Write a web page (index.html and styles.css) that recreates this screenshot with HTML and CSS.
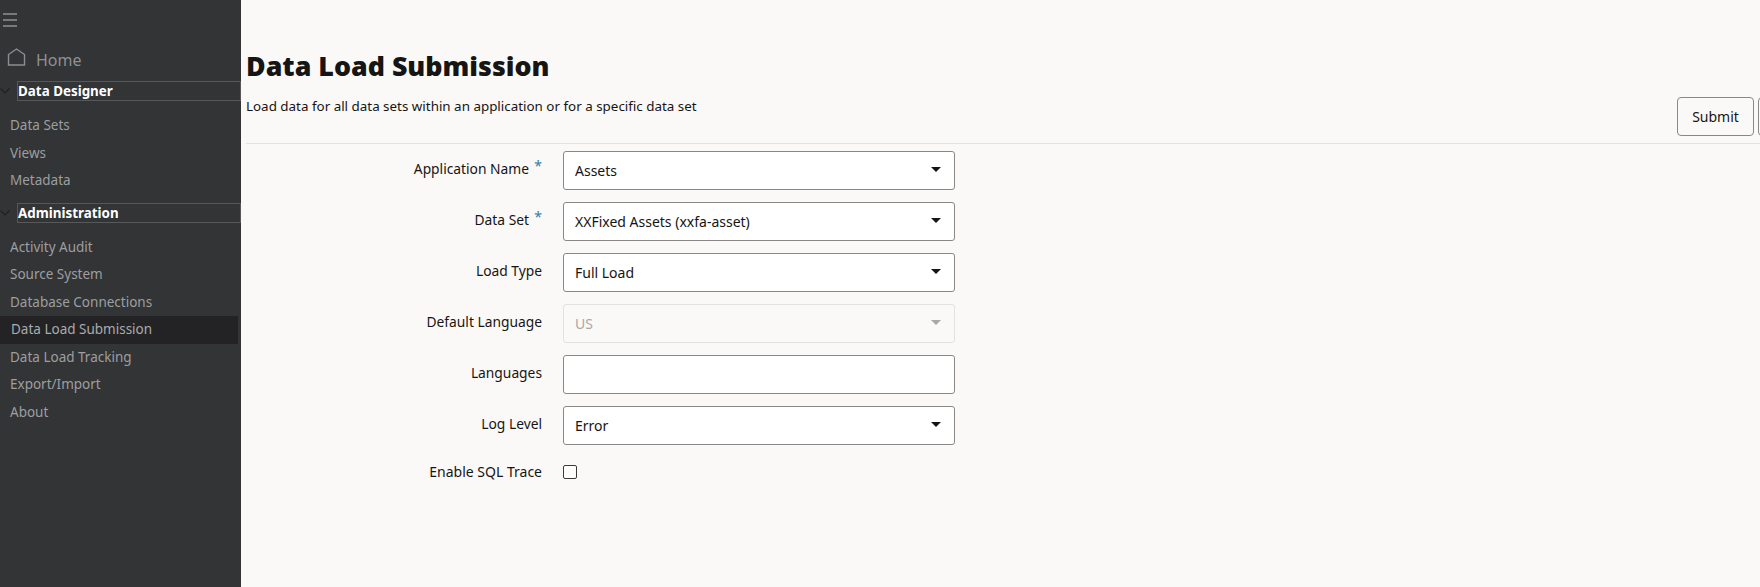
FILE: index.html
```html
<!DOCTYPE html>
<html lang="en">
<head>
<meta charset="utf-8">
<title>Data Load Submission</title>
<link rel="stylesheet" href="styles.css">
</head>
<body>
<div class="app">
  <nav class="sidebar">
    <button class="menu-btn" aria-label="Menu">
      <svg width="14" height="14" viewBox="0 0 14 14"><path d="M0 1h14M0 7h14M0 13h14" stroke="#8f9193" stroke-width="1.5" fill="none"/></svg>
    </button>
    <a class="home">
      <svg width="19" height="18" viewBox="0 0 19 18"><path d="M1.5 17V6.5L9.5 1l8 5.5V17z" stroke="#8c8f92" stroke-width="1.4" fill="none"/></svg>
      <span>Home</span>
    </a>
    <div class="group-head">
      <svg class="chev" width="10" height="6" viewBox="0 0 10 6"><path d="M.5.5 5 5 9.5.5" stroke="#1f2022" stroke-width="1.1" fill="none"/></svg>
      <div class="group-title">Data Designer</div>
    </div>
    <ul class="items">
      <li>Data Sets</li>
      <li>Views</li>
      <li>Metadata</li>
    </ul>
    <div class="group-head second">
      <svg class="chev" width="10" height="6" viewBox="0 0 10 6"><path d="M.5.5 5 5 9.5.5" stroke="#1f2022" stroke-width="1.1" fill="none"/></svg>
      <div class="group-title">Administration</div>
    </div>
    <ul class="items admin">
      <li>Activity Audit</li>
      <li>Source System</li>
      <li>Database Connections</li>
      <li class="active">Data Load Submission</li>
      <li>Data Load Tracking</li>
      <li>Export/Import</li>
      <li>About</li>
    </ul>
  </nav>
  <main class="main">
    <header class="page-head">
      <h1>Data Load Submission</h1>
      <div class="sub-row">
        <p>Load data for all data sets within an application or for a specific data set</p>
        <div class="actions">
          <button class="btn">Submit</button>
          <button class="btn" aria-label="More"></button>
        </div>
      </div>
    </header>
    <form class="form">
      <label class="lbl req">Application Name</label>
      <div class="field"><span>Assets</span><i class="caret"></i></div>
      <label class="lbl req">Data Set</label>
      <div class="field"><span>XXFixed Assets (xxfa-asset)</span><i class="caret"></i></div>
      <label class="lbl">Load Type</label>
      <div class="field"><span>Full Load</span><i class="caret"></i></div>
      <label class="lbl">Default Language</label>
      <div class="field disabled"><span>US</span><i class="caret"></i></div>
      <label class="lbl">Languages</label>
      <div class="field"></div>
      <label class="lbl">Log Level</label>
      <div class="field"><span>Error</span><i class="caret"></i></div>
      <label class="lbl check-lbl">Enable SQL Trace</label>
      <div class="check-cell"><span class="check"></span></div>
    </form>
  </main>
</div>
</body>
</html>
```
FILE: styles.css
```css
* { box-sizing: border-box; }
html, body { margin: 0; height: 100%; overflow: hidden; }
body { font-family: "Noto Sans", "Open Sans", sans-serif; color: #161513; background: #fbf9f8; }
.app { display: flex; height: 587px; }

.sidebar { width: 241px; flex: none; background: #323436; display: flex; flex-direction: column; }
.menu-btn { height: 14px; width: 15px; margin: 13px 0 0 2px; padding: 0; border: 0; background: none; display: block; line-height: 0; }
.home { display: flex; align-items: flex-start; margin: 21px 0 0 7px; height: 24px; color: #8e9092; font-size: 16px; }
.home span { margin: 1px 0 0 10px; line-height: 22px; }
.group-head { display: flex; align-items: center; margin-top: 9px; height: 20px; }
.group-head.second { margin-top: 8px; }
.chev { flex: none; margin: 0 7px 0 0; }
.group-title { flex: 1; height: 20px; border: 1px solid #56585a; color: #fff; font-weight: 700; font-size: 13.4px; line-height: 19px; }
.items { list-style: none; margin: 11px 0 0; padding: 0; }
.items li { height: 27.5px; line-height: 26.5px; padding-left: 10px; font-size: 13.5px; color: #9d9fa0; }
.items.admin { margin-top: 11px; }
.items li.active { background: #232325; color: #a9abac; width: 238px; padding-left: 11px; }

.main { flex: 1; min-width: 0; }
.page-head { margin: 0 0 0 5px; height: 144px; padding-top: 47px; border-bottom: 1px solid #e4e2e0; }
h1 { margin: 0; font-size: 26.8px; line-height: 38px; font-weight: 900; color: #161513; }
.sub-row { display: flex; justify-content: space-between; align-items: flex-start; margin-top: 4px; }
.sub-row p { margin: 7px 0 0; font-size: 13.4px; line-height: 20px; }
.actions { display: flex; gap: 4px; margin: 8px 0 0; width: 83px; flex: none; overflow: hidden; }
.btn { flex: none; width: 77px; height: 39px; padding: 0; border: 1px solid #8a8886; border-radius: 4px; background: #fbf9f8; font: 14px "Noto Sans", sans-serif; color: #161513; }

.form { display: grid; grid-template-columns: 301px 392px; column-gap: 21px; row-gap: 12.5px; padding-top: 7px; align-items: center; }
.lbl { justify-self: end; text-align: right; font-size: 13.8px; line-height: 20px; color: #161513; margin-top: -2px; }
.lbl.req { position: relative; padding-right: 13px; }
.lbl.req::after { content: "*"; position: absolute; right: 0; top: -3px; color: #2d7fa8; font-size: 14px; }
.field { height: 38.5px; display: flex; align-items: center; justify-content: space-between; background: #fff; border: 1px solid #8a8886; border-radius: 3px; padding: 0 13px 0 11px; font-size: 14px; }
.field.disabled { background: #fbf9f8; border-color: #e4e2e0; color: #a9a8a6; }
.caret { width: 0; height: 0; border: 5px solid transparent; border-top: 5.5px solid #161513; border-bottom: 0; margin-top: -2px; }
.disabled .caret { border-top-color: #a9a8a6; }
.check-cell { height: 20px; display: flex; align-items: center; margin-top: 5px; }
.check-lbl { margin-top: 5px; font-size: 14px; }
.check { width: 14px; height: 14px; border: 1px solid #3c3a38; border-radius: 2px; background: #fff; }
```
